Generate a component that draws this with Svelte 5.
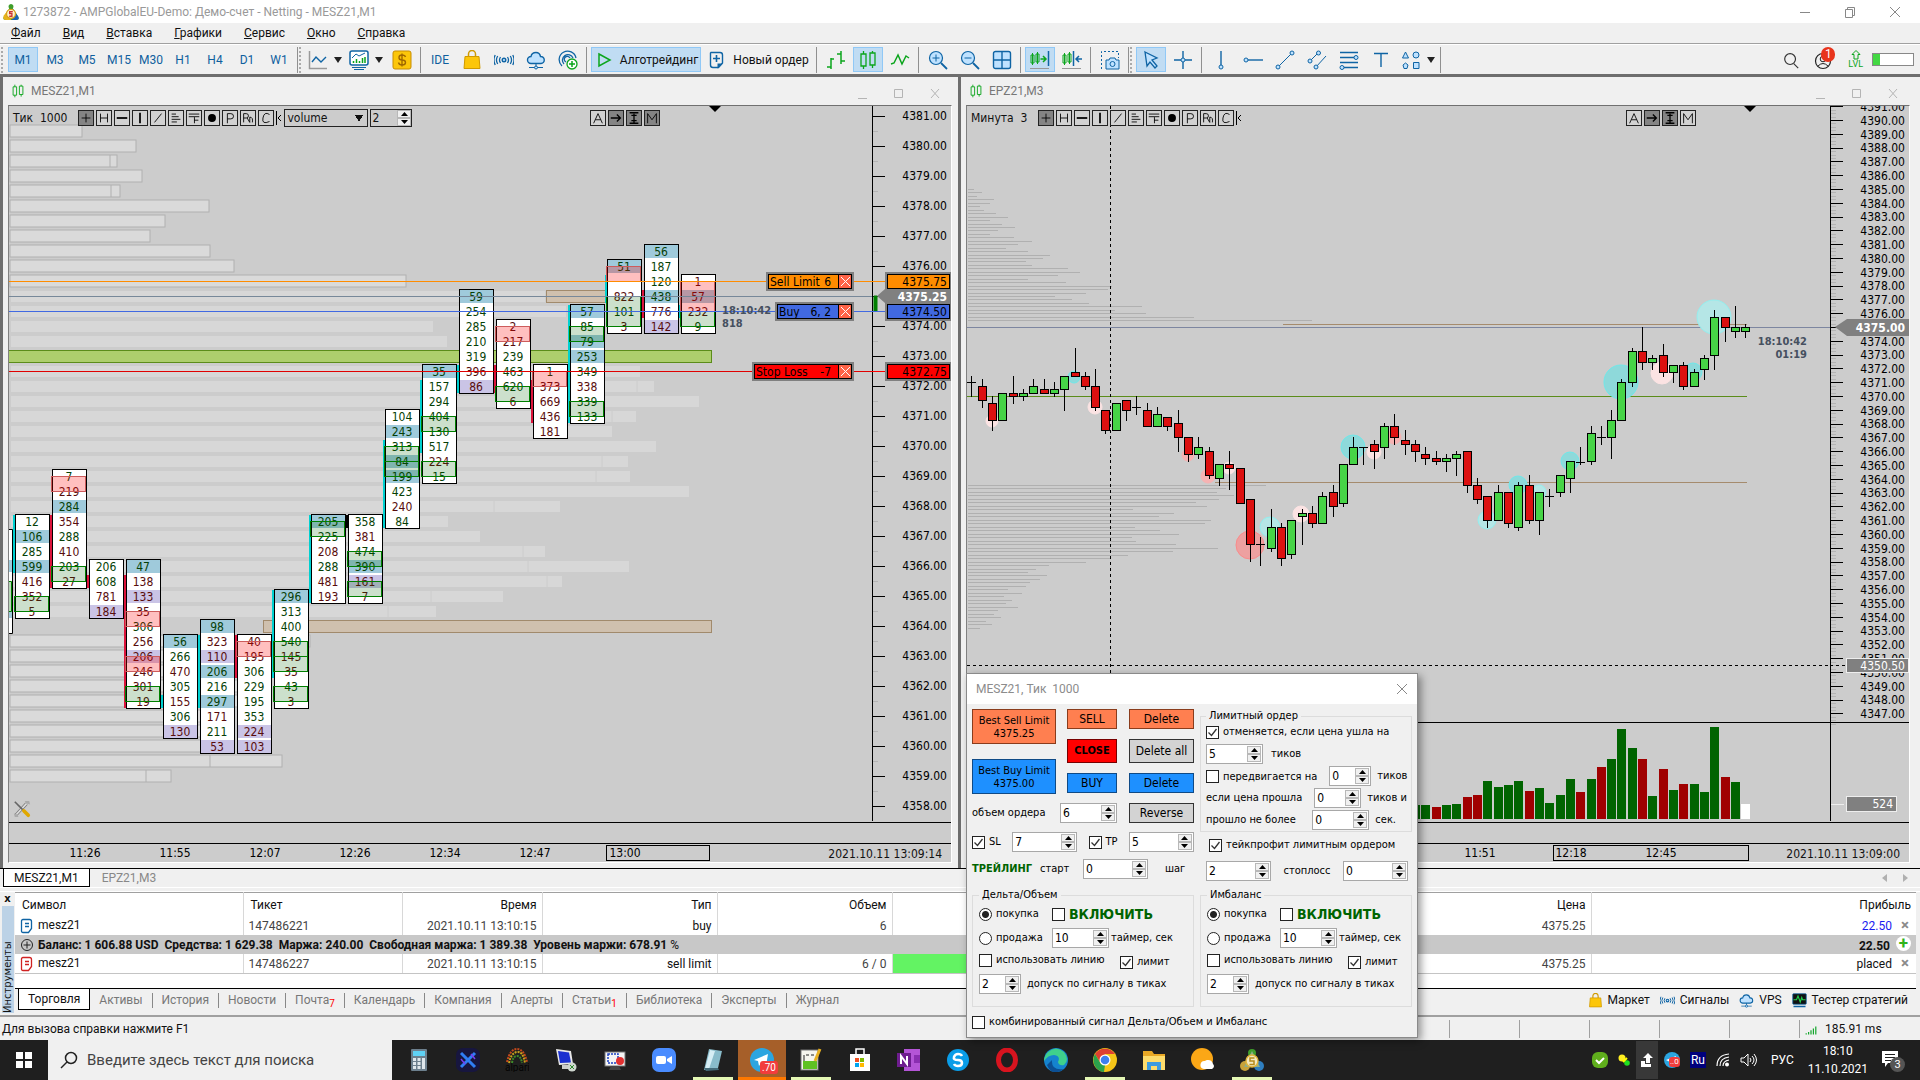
<script>
  const menu = ['Файл', 'Вид', 'Вставка', 'Графики', 'Сервис', 'Окно', 'Справка'];
  const timeframes = ['M1', 'M3', 'M5', 'M15', 'M30', 'H1', 'H4', 'D1', 'W1'];
  const pages = ['Активы', 'История', 'Новости', 'Почта', 'Календарь', 'Компания', 'Алерты', 'Статьи', 'Библиотека', 'Эксперты', 'Журнал'];
  const unread = { 'Почта': 7, 'Статьи': 1 };

  const B = 'stroke="#0f64a4" fill="none"';
  const L = 'stroke="#0f64a4" fill="#bfe2ff"';
  const G = 'stroke="#0ba51c" fill="none"';
  const cloud = `<path ${L} stroke-width="1.4" d="M5 13.500a3.500 3.500 0 0 1 0-7c.5-3 3-4 5-4s4 1.500 4.500 4a3.500 3.500 0 0 1 .5 7z"/><path ${B} d="M10 13.500v4M3 17.500h14"/><circle ${L} cx="10" cy="17.500" r="1.500"/>`;
  const bag = '<path stroke="#d09a00" stroke-width="1.500" fill="none" d="M6.500 8V4a3.500 3.500 0 0 1 7 0v4"/><path fill="#fcc60a" stroke="#d09a00" d="M3 6.500h14l1 12H2z"/>';
  const signal = `<circle ${L} stroke-width="1.400" cx="10" cy="10" r="1.800"/><path ${B} stroke-width="1.300" d="M6.500 7q-2 3 0 6M13.500 7q2 3 0 6M3.700 6q-2.500 4 0 8M16.300 6q2.500 4 0 8M1.200 5q-2.500 5 0 10M18.800 5q2.500 5 0 10"/>`;
  const sheet = `<path ${B} stroke-width="1.400" d="M4 2.500h9q2.500 0 2.500 2.500v8l-4 4.500H6q-2.500 0-2.500-2.500V3z"/>`;
  const icons = {
    line: `<path stroke="#9a9a9a" fill="none" stroke-width="1.500" d="M1.500 1v17.500H19"/><path ${B} stroke-width="1.400" d="M4 12l4-5 5 5 5-5"/>`,
    window: `<rect x="1" y="1" width="18" height="14" rx="2" fill="#fff" stroke="#0f64a4" stroke-width="1.500"/><path ${B} d="M3 8l4-4 3 2 6-3M3 17.500h14M5 19.500h10"/><path ${G} stroke-width="1.500" d="M4.500 13v-2M7.500 13V9M10.500 13v-2M13.500 13V8M16 13V7"/>`,
    dollar: '<rect x="1" y="1" width="18" height="18" rx="2" fill="#fcc60a" stroke="#c88d00"/><path stroke="#a06800" stroke-width="1.400" fill="none" d="M13.500 7Q13 5 10 5q-3 0-3 2.500T10 10q3.500 0 3.500 2.500T10 15q-3 0-3.500-2.500M10 3.500v13"/>',
    bag, signal, cloud,
    radio: `<path ${B} stroke-width="1.300" d="M4 16A8.500 8.500 0 1 1 18 8M6 14A5.500 5.500 0 1 1 15 8M8 12a3 3 0 1 1 4-4"/><circle cx="14" cy="14" r="5" fill="#fff" stroke="#0ba51c" stroke-width="1.300"/><path ${G} stroke-width="1.500" d="M14 11v6M11 14h6"/>`,
    play: `<path ${G} stroke-width="1.500" d="M5 4l11 6-11 6z"/>`,
    order: sheet + `<path ${B} stroke-width="1.600" d="M9.500 5v7M6 8.500h7"/><path fill="#0f64a4" d="M10.500 18.500v-5h5.500z"/>`,
    bars: `<path ${G} stroke-width="1.500" d="M5 8v11M1 17h4M5 9h3M15 1v13M11 4h4M15 11h4"/>`,
    candles: `<path ${G} stroke-width="1.300" d="M5.500 1v3M5.500 16v3M3 4h5v12H3zM14.500 1v2M14.500 15v3M12 3h5v12h-5z"/>`,
    zigzag: `<path ${G} stroke-width="1.500" d="M1 14l3-1 4-8 4 9 4-8 3 2"/>`,
    zoomin: `<path ${B} stroke-width="1.800" d="M13 13l6 6"/><circle ${L} stroke-width="1.200" cx="8" cy="8" r="6.500"/><path ${B} d="M8 4.500v7M4.500 8h7"/>`,
    zoomout: `<path ${B} stroke-width="1.800" d="M13 13l6 6"/><circle ${L} stroke-width="1.200" cx="8" cy="8" r="6.500"/><path ${B} d="M4.500 8h7"/>`,
    grid: `<rect ${L} stroke-width="1.400" x="1.500" y="1.500" width="17" height="17" rx="2"/><path ${B} stroke-width="1.400" d="M10 1v18M1 10h18"/>`,
    shift: `<path ${G} d="M2.500 3v12M1 5h3v8H1zM7.500 2v12M6 4h3v8H6z"/><path ${G} stroke-width="1.500" d="M10.500 9h5M13 6l3 3-3 3"/><path ${B} stroke-width="1.500" d="M18.500 1v15"/><path stroke="#999" d="M0 18.500h19"/>`,
    scroll: `<path ${G} d="M2.500 3v12M1 5h3v8H1zM7.500 2v12M6 4h3v8H6z"/><path ${B} stroke-width="1.500" d="M11.500 1v15M14 9h6M17 6l-3 3 3 3"/><path stroke="#999" d="M0 18.500h19"/>`,
    camera: `<path ${B} stroke-dasharray="2 2" d="M1.500 19V1.500h17V8"/><path ${L} d="M6 10h3l1-2h5l1 2h3v9H6z"/><circle ${L} cx="12.500" cy="14" r="2.500"/>`,
    cursor: `<path ${L} stroke-width="1.300" d="M4 2l12 6-5 2 5 6-2 2-5-6-3 4z"/>`,
    cross: `<path ${B} stroke-width="1.400" d="M10 1v7M10 12v7M1 10h7M12 10h7"/><circle ${L} cx="10" cy="10" r="2"/>`,
    vline: `<path ${B} stroke-width="1.400" d="M10 1v14"/><circle ${L} cx="10" cy="17" r="2"/>`,
    hline: `<path ${B} stroke-width="1.400" d="M5 10h15"/><circle ${L} cx="3" cy="10" r="2"/>`,
    trend: `<path ${B} d="M4 16L16 4"/><circle ${L} cx="3" cy="17" r="2"/><circle ${L} cx="17" cy="3" r="2"/>`,
    channel: `<path ${B} d="M4 10l7-7M9 17L19 6"/><circle ${L} cx="3" cy="11" r="2"/><circle ${L} cx="11.500" cy="3" r="2"/><circle ${L} cx="9" cy="17" r="2"/>`,
    fibo: `<path ${B} stroke-width="1.400" d="M1 2.500h18M1 7.500h15M1 12.500h18M4 17.500h15"/><circle ${L} cx="17" cy="7.500" r="2"/><circle ${L} cx="3" cy="17.500" r="2"/>`,
    text: `<path ${B} stroke-width="1.400" d="M3 3.500h14M10 3.500V17"/>`,
    shapes: `<path ${L} d="M1.500 8h6l-3-6zM2 15l2.500-2L7 15l-1 3.500H3zM12.500 12.500h5.500v6h-5.500z"/><circle ${L} cx="15" cy="5" r="3"/>`,
    search: '<circle cx="9" cy="9" r="6" fill="none" stroke="#333" stroke-width="1.300"/><path stroke="#333" stroke-width="1.300" d="M13 14l5 5"/>',
    user: '<circle cx="9" cy="11" r="7.500" fill="none" stroke="#222" stroke-width="1.200"/><circle cx="9" cy="9" r="2.800" fill="none" stroke="#222"/><path fill="none" stroke="#222" d="M4 16q5-5 10 0"/>',
    tester: '<rect x="1" y="1" width="18" height="14" rx="1" fill="#111" stroke="#0f64a4"/><path stroke="#1fd04a" stroke-width="1.500" fill="none" d="M2 9h4l2-5 3 8 2-6 1 3h4"/><path stroke="#0f64a4" stroke-width="2" d="M2 18h16"/>',
    levels: '<path fill="#13a62b" d="M1 17h2v2H1zM5 15h2v4H5zM9 12h2v7H9zM13 9h2v10h-2zM17 6h2v13h-2z"/>',
    mt: '<path d="M10 1a3 3 0 0 1 2 5L18 15q2 4-3 4H5q-5 0-3-4L8 6a3 3 0 0 1 2-5z" fill="#3f9e2c"/><path d="M12 6l6 9q2 4-3 4h-4z" fill="#1a63b5"/><path d="M2 14l4-5 4 10H5q-5 0-3-5z" fill="#e8b21a"/><circle cx="10" cy="12" r="5" fill="#fff3cf" stroke="#d8a21a" stroke-width="1.500"/><path stroke="#c33" fill="none" stroke-width="1.500" d="M12 9.500H8.500v2.200H11v3H8"/>',
    tools: '<path stroke="#777" stroke-width="3.500" d="M3 17L15 4"/><path stroke="#ddd" stroke-width="1.800" d="M3 17L15 4"/><path stroke="#666" stroke-width="1.800" d="M2 2l9 9"/><path stroke="#e0a800" stroke-width="4" stroke-linecap="round" d="M12 12l5 5"/><path d="M13 1l2 3 4 1-1-4M1 15l4 1 1 3H2z" fill="#aaa"/>',
  };

  const toolbar = [
    ['line', 'drop'], ['window', 'drop'], ['dollar'], 'sep', ['IDE'], ['bag'], ['signal'], ['cloud'], ['radio'], 'sep',
    ['play', 'wide on', 'Алготрейдинг'], ['order', 'wide', 'Новый ордер'], 'sep',
    ['bars'], ['candles', 'on'], ['zigzag'], 'sep', ['zoomin'], ['zoomout'], ['grid'], 'sep',
    ['shift', 'on'], ['scroll'], 'sep', ['camera'], 'grip', ['cursor', 'on'], ['cross'], 'sep',
    ['vline'], ['hline'], ['trend'], ['channel'], ['fibo'], ['text'], ['shapes', 'drop'],
  ];

  // glyphs of the square buttons that sit on the charts
  const marks = {
    plus: '<path d="M3 8h10M8 3v10"/>', H: '<path d="M4 3v10M12 3v10M4 8h8"/>', dash: '<path stroke-width="2" d="M2 8h12"/>',
    bar: '<path stroke-width="2" d="M8 2v12"/>', slash: '<path d="M4 13l8-10"/>', list: '<path d="M3 3.500h5M3 6.500h8M3 9.500h10M3 12.500h6"/>',
    F: '<path d="M2 3.500h12M2 6.500h12M8.500 14V7M8 10.500h5"/>', dot: '<circle cx="8" cy="8" r="4.500" fill="#000"/>',
    P: '<path d="M5 14V3h4q3 0 3 3t-3 3H5"/>', R: '<path d="M3 13V3h3q2.500 0 2.500 2.500T6 8H3M7 8l3 5M10 13V7q4 0 3 6"/>', C: '<path d="M12 4Q6 0 4.500 8T12 12"/>',
    A: '<path d="M3 14l5-11 5 11M5 10h6"/>', arrow: '<path stroke-width="1.500" d="M2 8h10M9 4l4 4-4 4"/>', fit: '<path stroke-width="1.500" d="M3 2h10M3 14h10M8 3v10M5 5h6M5 11h6"/>',
    M: '<path d="M3 14V3l5 7 5-7v11"/>',
  };
  const drawing = ['plus', 'H', 'dash', 'bar', 'slash', 'list', 'F', 'dot', 'P', 'R', 'C'];

  // footprint columns: first row, cells (g/r text, b/p fill), imbalance zones, side bar
  const columns = [
    [18, '12g 106gb 285g 599gb 416r 352r 5r', 'G5', 'c', 0, 4],
    [15, '7g 219r 284gb 354r 288g 410r 203g 27r', 'R0 G6', 'r', 3, 5],
    [21, '206g 608g 781r 184rp', '', 'r', 1, 1],
    [21, '47gb 138r 133rp 35r 306g 256r 206rp 246r 301r 19r', 'R3 R6 G8', 'r', 1, 9],
    [26, '56gb 266g 470r 305g 155r 306g 130rp', '', 'c', 4, 1],
    [25, '98gb 323r 110rp 206gb 216g 297gb 171r 211g 53rp', '', 'c', 1, 5],
    [26, '40r 195r 306g 229g 195g 353g 224rp 103rp', 'R0', 'r', 0, 3],
    [23, '296gb 313g 400g 540g 145r 35r 43g 3r', 'G3 G4 G6', 'c', 0, 6],
    [18, '205gb 225g 208r 288g 481r 193r', 'G0', 'c', 0, 6],
    [18, '358g 381r 474g 390gb 161rp 7r', 'G2 G4', 'k', 0, 1],
    [11, '104g 243gb 313g 84gb 199gb 423g 240r 84g', 'G2 G3', 'c', 2, 6],
    [8, '35gb 157g 294g 404g 130g 517g 224r 15g', 'G3 G6', 'c', 1, 5],
    [3, '59gb 254g 285g 210g 319g 396r 86rp', '', 'c', 5, 2],
    [5, '2r 217r 239g 463g 620g 6r', 'R0 G4', 'r', 3, 2],
    [8, '1g 373r 669r 436r 181r', 'R0', 'r', 1, 3],
    [4, '57gb 85g 79gb 253gb 349g 338r 339g 133g', 'G1 G6', 'c', 0, 8],
    [1, '51gb - 822r 101g 3r', 'R0 G2 G3', 'c', 1, 2],
    [0, '56gb 187g 120g 438gb 776r 142rp', '', 'r', 3, 2],
    [2, '1r 57rb 232r 9g', 'R0 R1 G2', 'c', 2, 1],
  ].map(([row, cells, zones, side, from, n], i) => ({
    x: 6 + 37 * i,
    y: 138 + 15 * row,
    cells: cells.split(' ').map((c) => ({ text: c.replace(/\D/g, ''), ink: c.includes('r') ? '#580c0c' : '#063f06', fill: c.includes('b') ? '#9fcadb' : c.includes('p') ? '#cac4e6' : '' })),
    zones: zones.split(' ').filter(Boolean).map((z) => ({ up: z[0] === 'G', row: +z.slice(1) })),
    side: { c: '#00d0d0', r: '#dc143c', k: '#000' }[side], from, n,
  }));

  // [row, end, divider]
  const outlined = [
    [-8, 72], [-7, 126], [-6, 107, 101], [-5, 132], [-4, 110, 102], [-3, 199], [-2, 155], [-1, 140], [0, 200], [1, 224], [2, 396],
    [26, 300], [27, 240], [28, 240], [29, 240], [30, 240], [31, 200], [32, 210, 168], [33, 213, 208], [34, 272, 201], [35, 161, 137],
  ];
  const plain = [
    [3, 536], [4, 557], [5, 424], [6, 438], [8, 631], [9, 645, 628], [10, 690], [11, 627, 603], [12, 603], [13, 647], [14, 619, 593], [15, 621, 587],
    [16, 680], [17, 551, 485], [18, 439], [19, 471], [20, 536, 514], [21, 620, 519], [22, 553, 538], [23, 494, 422], [24, 427, 379],
  ];

  const leftPrices = Array.from({ length: 24 }, (_, i) => 4381 - i);
  const rightPrices = Array.from({ length: 45 }, (_, i) => 4391 - i);
  const leftTimes = [['11:26', 76], ['11:55', 166], ['12:07', 256], ['12:26', 346], ['12:34', 436], ['12:47', 526], ['13:00', 616]];
  const orders = [
    ['Sell Limit', '6', 757, 175, '#ff8c00', '4375.75'],
    ['Buy', '6,  2', 766, 205, '#4169e1', '4374.50'],
    ['Stop Loss', '-7', 743, 265, '#ff0000', '4372.75'],
  ];

  // high, body top, body bottom, low, colour
  const candles = `96 102 102 117 n,99 106 121 128 r,116 123 141 151 r,113 113 141 141 g,96 113 117 124 r,109 113 117 121 g,99 106 114 114 g,99 109 114 114 r,102 109 114 117 g,96 96 110 131 g,68 92 97 97 r,92 96 107 110 r,89 106 128 131 r,130 130 151 154 r,123 123 151 151 g,120 120 131 141 r,116 127 127 135 n,123 130 147 147 r,127 134 147 147 g,137 137 147 151 r,130 143 158 172 r,157 157 175 182 r,157 167 175 179 g,167 171 196 199 r,184 184 199 206 g,171 184 189 210 r,188 188 224 224 r,219 219 265 282 r,257 264 264 286 n,229 247 269 272 g,243 247 279 286 r,240 240 275 279 g,229 233 237 265 g,226 233 244 248 r,212 216 244 244 g,205 212 227 237 r,184 184 224 227 g,157 167 185 185 g,167 167 167 185 n,160 164 172 189 r,143 146 168 179 g,134 146 158 165 r,150 160 165 175 r,160 164 172 182 r,167 174 179 185 r,171 178 182 185 r,174 178 182 192 g,171 174 179 196 g,171 171 206 213 r,198 205 220 224 r,216 216 241 248 r,205 212 241 241 g,212 212 244 248 r,202 205 248 251 g,195 205 241 244 r,212 212 241 255 g,209 216 216 227 n,195 195 213 217 g,181 181 199 213 g,167 182 182 185 n,146 153 182 185 g,146 157 157 165 n,130 140 158 179 g,99 102 141 141 g,68 71 103 107 g,47 71 83 90 r,75 78 83 90 g,64 75 93 97 r,85 85 93 103 g,82 85 107 110 r,89 92 107 107 g,75 78 90 100 g,30 37 76 90 g,37 37 48 62 r,26 47 52 58 g,44 47 52 58 g`
    .split(',')
    .map((s, i) => {
      const [hi, top, bottom, lo, kind] = s.split(' ');
      return { x: Math.round(4.3 + 10.32 * i), hi: +hi, top: +top, bottom: +bottom, lo: +lo, kind };
    });

  const bubbles = [
    [107, 97, 6, 'c'], [25, 141, 6, 'w'], [128, 127, 7, 'w'], [221, 175, 6, 'p'], [241, 196, 7, 'p'], [262, 188, 6, 'w'], [283, 265, 14, 'r'],
    [303, 247, 10, 'l'], [334, 234, 8, 'w'], [386, 167, 12, 'c'], [407, 172, 7, 'w'], [427, 157, 7, 'p'], [520, 240, 9, 'l'], [551, 205, 9, 'c'],
    [572, 212, 7, 'l'], [603, 181, 9, 'c'], [654, 102, 17, 'c'], [695, 93, 11, 'w'], [726, 92, 9, 'c'], [747, 37, 17, 'l'],
  ];
  const bubbleFill = { c: '#8ed9da', l: '#b5e6e6', w: '#fbe3e3', p: '#f6b3b3', r: '#eda0a0' };
  const bubbleLine = { c: '#6ee8ea', l: '#93efef', w: '#fbe3e3', p: '#f6b3b3', r: '#fa8b8b' };

  const volume = '14g 14g 12r 14g 15g 22r 24r 38g 32g 34g 38g 28r 31g 16g 24g 40g 27r 40g 52r 60g 90g 71g 60r 23g 50r 29g 35r 35g 27g 92g 42r 37g 15w'
    .split(' ')
    .map((s, i) => ({ h: parseInt(s), fill: { g: '#006400', r: '#a00000', w: '#fff' }[s.at(-1)], x: Math.round(4.3 + 10.32 * (i + 43)) }));

  const upperProfile = [6, 14, 9, 26, 22, 12, 16, 28, 40, 22, 34, 47, 30, 22, 46, 64, 50, 38, 60, 82, 75, 58, 64, 100, 112, 90, 60, 98, 144, 140, 118, 87, 104, 121, 174, 147, 178, 226, 344];
  const lowerProfile = [298, 258, 249, 266, 251, 228, 239, 165, 206, 191, 243, 237, 167, 192, 211, 164, 168, 208, 250, 205, 160, 142, 118, 81, 68, 60, 79, 72, 62, 58, 40, 54, 36, 44, 38, 50, 30, 26, 33, 18, 24, 12];

  const apps = [
    '<rect x="4" y="1" width="16" height="22" rx="1" fill="#6c7f8d"/><path fill="#5fd2f5" d="M6 3h12v5H6z"/><path fill="#dfe7ec" d="M6 10h3v3H6zM10.500 10h3v3h-3zM6 14h3v3H6zM10.500 14h3v3h-3zM6 18h3v3H6zM10.500 18h3v3h-3zM15 10h3v11h-3z"/>',
    '<rect width="24" height="24" rx="7" fill="#17163f"/><path stroke="#2f7ef5" stroke-width="3" d="M5 5l14 14M19 5L5 19"/><path stroke="#7a3df0" stroke-width="1.500" d="M5 11l4 5M19 11l-4-5"/>',
    '<path fill="none" stroke="#c64a1c" stroke-width="2" stroke-dasharray="2 1" d="M2 14Q5 1 12 1t10 13"/><path fill="none" stroke="#c7a21c" stroke-width="2" stroke-dasharray="2 1" d="M4 15Q6 5 12 4t8 11"/><path fill="none" stroke="#3e8b2a" stroke-width="2" stroke-dasharray="2 1" d="M7 15Q8 8 12 8t5 7"/><text x="0" y="23" font-size="10" fill="#050505">alpari</text>',
    '<path fill="#e8e8e8" d="M2 1l15 2 2 13-14 1z"/><path fill="#1a2fd0" d="M4 3l11 1.500 2 10L6 15z"/><path fill="#ccc" d="M8 17h7l3 4H8z"/><circle cx="18" cy="19" r="4.500" fill="#cfd6cf"/><path stroke="#2e8b2e" d="M16 17l4 4M20 17l-4 4"/>',
    '<rect x="2" y="4" width="20" height="14" fill="#f5f5f5" stroke="#777"/><path d="M8 18h8l2 4H6z" fill="#444"/><rect x="5" y="6" width="10" height="9" fill="none" stroke="#1a3fc0" stroke-dasharray="2 1" stroke-width="1.500"/><circle cx="17" cy="13" r="4" fill="#e03030"/>',
    '<rect width="24" height="24" rx="7" fill="#4a8cff"/><rect x="4" y="8" width="10" height="8" rx="2" fill="#fff"/><path fill="#fff" d="M15 11l5-3v8l-5-3z"/>',
    '<path fill="#89bccb" d="M8 1l13 2-4 17-14 2z"/><path fill="#d6eef5" d="M9 2l5 1-6 18-4 0z"/><path fill="#456c7a" d="M3 20l14 0 1 2-13 1z"/>',
    '<circle cx="12" cy="12" r="12" fill="#2ca5e0"/><path fill="#fff" d="M4 12l14-6-2 12-5-3-2 3-1-5z"/>',
    '<rect x="2" y="2" width="17" height="20" fill="#f5f5ee" stroke="#777"/><path fill="#5fc122" d="M4 13h14v8H4z"/><path stroke="#222" d="M5 7v6M7 7h3M12 7h3"/><path stroke="#e8b020" stroke-width="3" d="M21 1l-5 12"/>',
    '<path fill="none" stroke="#fff" stroke-width="1.500" d="M8 6V1h8v5"/><path fill="#fff" d="M2 6h20v17H2z"/><path fill="#f25022" d="M7 10h4v4H7z"/><path fill="#7fba00" d="M12 10h4v4h-4z"/><path fill="#00a4ef" d="M7 15h4v4H7z"/><path fill="#ffb900" d="M12 15h4v4h-4z"/>',
    '<path fill="#b455d6" d="M7 1h16v22H7z"/><path fill="#8a2eb0" d="M17 7h6v8h-6z"/><rect y="5" width="14" height="14" fill="#6e1d8f"/><path stroke="#fff" stroke-width="2" fill="none" d="M4 16V8l6 8V8"/>',
    '<circle cx="12" cy="12" r="11" fill="#0a9de8"/><path fill="none" stroke="#fff" stroke-width="2.500" d="M16 8q-1-2-4-2t-4 3 4 3q4 0 4 3t-4 3q-3 0-4-2"/>',
    '<ellipse cx="12" cy="12" rx="8.500" ry="10" fill="none" stroke="#d8141f" stroke-width="5"/>',
    '<circle cx="12" cy="12" r="12" fill="#1583cf"/><path fill="#3fd08c" d="M4 4Q12-3 20 4q6 8 0 13-5 1-6-3 3-6-4-7-6 0-10 6Q0 8 4 4z"/><path fill="#0c4f94" d="M8 12q-1 11 12 9-12 8-17-4z"/>',
    '<circle cx="12" cy="12" r="12" fill="#f5c518"/><path fill="#de4032" d="M2 6A12 12 0 0 1 22 6H12L7 14z"/><path fill="#2ba24c" d="M2 6l6 10 4 1-1 7A12 12 0 0 1 2 6z"/><circle cx="12" cy="12" r="5.500" fill="#fff"/><circle cx="12" cy="12" r="4.300" fill="#3d7ff0"/>',
    '<path fill="#e9a825" d="M1 3h9l2 3h11v16H1z"/><path fill="#fddc6c" d="M1 8h22v14H1z"/><path fill="#3c9be0" d="M5 22v-8h14v8h-4v-4H9v4z"/>',
    '<circle cx="11" cy="11" r="11" fill="#fba716"/><path fill="#fff" d="M13 21a4 4 0 0 1 1-8 5 5 0 0 1 8 3 3 3 0 0 1-1 5z"/>',
    '<circle cx="12" cy="5" r="4" fill="#3f9e2c"/><circle cx="5" cy="18" r="5" fill="#c8a23a"/><circle cx="19" cy="18" r="5" fill="#2f7fc0"/><path d="M12 3l8 16H4z" fill="#8fae8a"/><circle cx="12" cy="13" r="6" fill="#f4e9c0" stroke="#e0b43a" stroke-width="1.500"/><path stroke="#b58a1a" fill="none" stroke-width="1.500" d="M14.500 10H10v3h4v3.500H9.500"/>',
  ];
  const running = [6, 8, 14, 17];
</script>

{#snippet icon(name, size = 20)}
  <svg class="icon" width={size} height={size} viewBox="0 0 20 20">{@html icons[name]}</svg>
{/snippet}

{#snippet mark(name, on)}
  <button class="mark" class:on aria-label={name}><svg width="14" height="14" viewBox="0 0 16 16">{@html marks[name]}</svg></button>
{/snippet}

{#snippet arrows()}
  <span class="arrows"><button type="button" aria-label="Больше"><svg width="7" height="4"><path d="M0 4h7L3.500 0z" /></svg></button><button type="button" aria-label="Меньше"><svg width="7" height="4"><path d="M0 0h7L3.500 4z" /></svg></button></span>
{/snippet}

{#snippet spin(id, value, size, label)}
  <span class="spin {size}"><input {id} type="text" {value} aria-label={label} />{@render arrows()}</span>
{/snippet}

{#snippet tick(id, text, checked = false)}
  <label class="tick" for={id}><input {id} type="checkbox" {checked} />{text}</label>
{/snippet}

{#snippet windowButtons()}
  <span class="winbtns">
    <button aria-label="Свернуть"><svg width="12" height="12"><path d="M1 11.500h9" /></svg></button>
    <button aria-label="Развернуть"><svg width="12" height="12"><path d="M1.500 2.500h8v8h-8z" /></svg></button>
    <button aria-label="Закрыть"><svg width="12" height="12"><path d="M2 2l8 9M10 2l-8 9" /></svg></button>
  </span>
{/snippet}

{#snippet signalGroup(id, title)}
  <fieldset class="group signal {id}">
    <legend>{title}</legend>
    <div class="line">
      <label class="tick way" for="{id}-buy"><input id="{id}-buy" name={id} type="radio" checked />покупка</label>
      <label class="tick enable" for="{id}-on"><input id="{id}-on" type="checkbox" />ВКЛЮЧИТЬ</label>
    </div>
    <div class="line">
      <label class="tick way" for="{id}-sell"><input id="{id}-sell" name={id} type="radio" />продажа</label>
      {@render spin(id + '-timer', 10, 'w57')}
      <label for="{id}-timer">таймер, сек</label>
    </div>
    <div class="line">
      <span class="useline">{@render tick(id + '-line', 'использовать линию')}</span>
      {@render tick(id + '-limit', 'лимит', true)}
    </div>
    <div class="line tolerance">
      {@render spin(id + '-tol', 2, 'w42')}
      <label for="{id}-tol">допуск по сигналу в тиках</label>
    </div>
  </fieldset>
{/snippet}

<div class="screen">
  <header class="titlebar">
    {@render icon('mt')}
    <h1>1273872 - AMPGlobalEU-Demo: Демо-счет - Netting - MESZ21,M1</h1>
    <span class="appbtns">
      <button aria-label="Свернуть"><svg width="12" height="12"><path d="M1 6.500h10" /></svg></button>
      <button aria-label="Восстановить"><svg width="12" height="12"><path d="M1.500 3.500h7v8h-7zM3.500 3V1.500h7v8H9" /></svg></button>
      <button aria-label="Закрыть"><svg width="12" height="12"><path d="M1 1l10 10M11 1L1 11" /></svg></button>
    </span>
  </header>

  <nav class="menu">
    {#each menu as item}
      <a href="#{item}"><u>{item[0]}</u>{item.slice(1)}</a>
    {/each}
  </nav>

  <div class="toolbar">
    <i class="grip"></i>
    {#each timeframes as tf, i}
      <button class="tool" class:on={i === 0}>{tf}</button>
    {/each}
    <i class="sep"></i><i class="grip"></i>
    {#each toolbar as item}
      {#if item === 'sep'}
        <i class="sep"></i>
      {:else if item === 'grip'}
        <i class="sep"></i><i class="grip"></i>
      {:else}
        <button class="tool {item[1] ?? ''}" aria-label={item[2] ?? item[0]}>
          {#if item[0] === 'IDE'}IDE{:else}{@render icon(item[0])}{/if}
          {#if item[2]}<span>{item[2]}</span>{/if}
          {#if item[1] === 'drop'}<svg width="8" height="6"><path d="M0 0h8L4 6z" fill="#222" /></svg>{/if}
        </button>
      {/if}
    {/each}
    <i class="sep"></i>
    <div class="account">
      <button aria-label="Поиск">{@render icon('search', 18)}</button>
      <button class="user" aria-label="Уведомления">{@render icon('user')}<b>1</b></button>
      <span class="lvl"><svg width="12" height="10"><path d="M6 .5l4 4H8V9H4V4.500H2z" fill="none" stroke="#0ba51c" /></svg>LVL</span>
      <span class="battery"><i></i></span>
    </div>
  </div>

  <main class="workspace">
    <section class="window">
      <header>
        <svg class="icon" width="14" height="14" viewBox="0 0 20 20">{@html icons.candles}</svg>
        <h2>MESZ21,M1</h2>
        {@render windowButtons()}
      </header>
      <div class="chart">
        <svg class="plot" height="756">
          {#each outlined as [row, end, div]}
            <rect x="1" y={138 + 15 * row + 1} width={end} height="12" fill="#dadada" stroke="#b0b0b0" />
            {#if div}<path d="M{div} {138 + 15 * row + 1}v12" stroke="#b0b0b0" />{/if}
          {/each}
          {#each plain as [row, end, div]}
            <rect x="2" y={138 + 15 * row + 2} width={end - 2} height="11" fill="#d7d7d7" />
            {#if div}<path d="M{div} {138 + 15 * row + 2}v11" stroke="#ccc" />{/if}
          {/each}
          <rect x="-1" y="244.500" width="703.500" height="12" fill="#adce6d" stroke="#5b8c1a" />
          <rect x="537.500" y="184.500" width="64" height="12" fill="#cfc0ae" stroke="#a18a6c" />
          <rect x="254.500" y="514.500" width="448" height="12" fill="#cfc0ae" stroke="#a18a6c" />
          <path d="M0 423.500h3.500v104H0" fill="#fff" stroke="#000" />
          <path d="M0 454h3v12H0zM0 500h3v12H0z" fill="#9fcadb" />
          <path d="M0 475.500h2.500v30H0" fill="#b9d6b9" stroke="#008000" />
          {#each columns as c}
            {#if c.side}<rect x={c.x - 2} y={c.y + 15 * c.from + 1} width="3" height={15 * c.n - 2} fill={c.side} />{/if}
            <rect x={c.x + 0.5} y={c.y + 0.5} width="34" height={15 * c.cells.length - 1} fill="#fff" stroke="#000" />
            {#each c.cells as cell, r}
              {#if cell.fill}<rect x={c.x + 1} y={c.y + 15 * r + 1} width="33" height="13" fill={cell.fill} />{/if}
              <text class="cell" x={c.x + 17} y={c.y + 15 * r + 12} fill={cell.ink}>{cell.text}</text>
            {/each}
            {#each c.zones as z}
              <rect x={c.x - 0.5} y={c.y + 15 * z.row + 7.5} width="34" height="15" fill={z.up ? '#00640033' : '#ff000040'} stroke={z.up ? '#008000' : '#cd5c5c'} />
            {/each}
          {/each}
          <path d="M0 175.500h863" stroke="#ff8c00" />
          <path d="M0 190.500h863" stroke="#778899" />
          <path d="M0 205.500h863" stroke="#4169e1" />
          <path d="M0 265.500h863" stroke="#e00000" />
          <text class="clock" x="713" y="208">18:10:42</text>
          <text class="clock" x="713" y="221">818</text>
          {#each orders as [name, lots, x, y, fill]}
            <rect {x} y={y - 9} width={845 - x} height="19" fill="#808080" />
            <rect x={x + 2.5} y={y - 6.5} width={840 - x} height="14" {fill} stroke="#000" />
            <rect x="829.500" y={y - 6.5} width="13" height="14" fill="#ff6347" stroke="#000" />
            <path d="M832 {y - 4}l9 9M841 {y - 4}l-9 9" stroke="#fff" />
            <text x={x + 4} y={y + 5}>{name}</text>
            <text class="end" x="822" y={y + 5}>{lots}</text>
          {/each}
          <path d="M700 0h12l-6 6z" />
          <path d="M0 716.500h863M0 737.500h863" stroke="#000" />
          <rect x="597.500" y="739.500" width="103" height="15" fill="none" stroke="#000" />
          {#each leftTimes as [time, x]}
            <text class="mid" {x} y="751">{time}</text>
          {/each}
        </svg>
        <svg class="axis" height="756">
          <path d="M.5 0v715M0 716.500h80M0 737.500h80" stroke="#000" />
          {#each leftPrices as p, i}
            <path d="M0 {10.5 + 30 * i}h13" stroke="#000" />
            {#if i < 23}<path d="M1 {25.5 + 30 * i}h5" stroke="#b4b4b4" />{/if}
            {#if p !== 4375}<text class="end" x="75" y={14 + 30 * i}>{p}.00</text>{/if}
          {/each}
          <path d="M2 190h3v15H2z" fill="#008000" stroke="#008000" />
          <path d="M5 190l8-7h66v14H13z" fill="#808080" />
          <text class="end tag" x="75" y="195">4375.25</text>
          {#each orders as [, , , y, fill, price]}
            <path d="M0 {y + 0.5}h13" stroke={fill} />
            <rect x="13" y={y - 9} width="66" height="19" fill="#808080" />
            <rect x="15.500" y={y - 6.5} width="62" height="14" {fill} stroke="#000" />
            <text class="end" x="75" y={y + 5}>{price}</text>
          {/each}
        </svg>
        <div class="panel">
          <span>Тик&nbsp; 1000</span>
          {#each drawing as name, i}{@render mark(name, i === 0)}{/each}
          <svg class="fold" width="6" height="14"><path d="M.5 0v14M5 4L2 7l3 3" fill="none" stroke="#000" /></svg>
          <select aria-label="Тип кластера"><option>volume</option></select>
          <span class="spin flat"><input type="text" value="2" aria-label="Масштаб" />{@render arrows()}</span>
        </div>
        <div class="panel modes">{@render mark('A')}{@render mark('arrow', true)}{@render mark('fit', true)}{@render mark('M', true)}</div>
        <div class="wrench">{@render icon('tools', 18)}</div>
        <time>2021.10.11 13:09:14</time>
      </div>
    </section>

    <section class="window">
      <header>
        <svg class="icon" width="14" height="14" viewBox="0 0 20 20">{@html icons.candles}</svg>
        <h2>EPZ21,M3</h2>
        {@render windowButtons()}
      </header>
      <div class="chart">
        <svg class="plot" height="756">
          {#each upperProfile as w, i}
            <path d="M1 {Math.round(83 + 3.45 * i) + 0.5}h{w}" stroke="#b0b0b0" />
          {/each}
          {#each lowerProfile as w, i}
            <path d="M1 {Math.round(379 + 3.48 * i) + 0.5}h{w}" stroke="#b0b0b0" />
          {/each}
          <path d="M316 218.500h464M248 376.500h532" stroke="#a58b6d" />
          <path d="M0 221.500h863" stroke="#7d86a0" />
          <path d="M0 290.500h780" stroke="#5b8c1a" />
          <g transform="translate(0 174)">
            {#each bubbles as [cx, cy, r, kind]}
              <circle {cx} {cy} {r} fill={bubbleFill[kind]} stroke={bubbleLine[kind]} />
            {/each}
            {#each candles as c}
              <path d="M{c.x + 0.5} {c.hi}V{c.lo}" stroke="#000" />
              {#if c.kind === 'n'}
                <path d="M{c.x - 4} {c.top + 0.5}h9" stroke="#000" />
              {:else}
                <rect x={c.x - 3.5} y={c.top + 0.5} width="8" height={Math.max(c.bottom - c.top - 1, 3)} fill={c.kind === 'g' ? '#47d447' : '#dc1010'} stroke="#000" />
              {/if}
            {/each}
          </g>
          <path d="M143.500 0v616M0 559.500h863" stroke="#000" stroke-dasharray="3 3" />
          {#each volume as v}
            <rect x={v.x - 4} y={713 - v.h} width="9" height={v.h} fill={v.fill} />
          {/each}
          <text class="clock end" x="840" y="239">18:10:42</text>
          <text class="clock end" x="840" y="252">01:19</text>
          <path d="M777 0h12l-6 6z" />
          <path d="M0 616.500h863M0 716.500h863M0 737.500h863" stroke="#000" />
          <rect x="586.500" y="739.500" width="195" height="15" fill="none" stroke="#000" />
          <text class="mid" x="513" y="751">11:51</text>
          <text class="mid" x="604" y="751">12:18</text>
          <text class="mid" x="694" y="751">12:45</text>
        </svg>
        <svg class="axis" height="756">
          <path d="M.5 0v715M0 616.500h80M0 716.500h80M0 737.500h80" stroke="#000" />
          {#each rightPrices as p, i}
            <path d="M0 {Math.round(0.2 + 13.8 * i) + 0.5}h13" stroke="#000" />
            {#each [1, 2, 3] as k}<path d="M1 {Math.round(0.2 + 13.8 * i + 3.45 * k) + 0.5}h5" stroke="#b4b4b4" />{/each}
            {#if p !== 4375}<text class="end" x="75" y={Math.round(13.8 * i) + 5}>{p}.00</text>{/if}
          {/each}
          <path d="M5 221l12-8h62v17H17z" fill="#808080" />
          <text class="end tag" x="75" y="226">4375.00</text>
          <path d="M0 559.500h16" stroke="#000" stroke-dasharray="3 3" />
          <rect x="16.500" y="552.500" width="62" height="14" fill="#808080" stroke="#eee" />
          <text class="end tag light" x="75" y="564">4350.50</text>
          <path d="M1 698.500h13" stroke="#eee" />
          <rect x="16.500" y="690.500" width="50" height="15" fill="#808080" stroke="#eee" />
          <text class="end tag light" x="63" y="702">524</text>
        </svg>
        <div class="panel">
          <span>Минута&nbsp; 3</span>
          {#each drawing as name, i}{@render mark(name, i === 0)}{/each}
          <svg class="fold" width="6" height="14"><path d="M.5 0v14M5 4L2 7l3 3" fill="none" stroke="#000" /></svg>
        </div>
        <div class="panel modes">{@render mark('A')}{@render mark('arrow', true)}{@render mark('fit', true)}{@render mark('M')}</div>
        <time>2021.10.11 13:09:00</time>
      </div>
    </section>
  </main>

  <nav class="tabs">
    <a class="active" href="#mesz">MESZ21,M1</a>
    <a href="#epz">EPZ21,M3</a>
    <span class="nudge"><svg width="5" height="8"><path d="M5 0v8L0 4z" /></svg><svg width="5" height="8"><path d="M0 0v8l5-4z" /></svg></span>
  </nav>

  <section class="terminal">
    <div class="strip"><button aria-label="Закрыть панель">x</button><span>Инструменты</span></div>
    <div class="terminal-main">
      <table>
        <colgroup><col class="c1" /><col class="c2" /><col class="c3" /><col class="c4" /><col class="c5" /><col /><col class="c7" /><col class="c8" /></colgroup>
        <thead>
          <tr><th class="left">Символ</th><th class="left">Тикет</th><th>Время</th><th>Тип</th><th>Объем</th><th class="hid"></th><th>Цена</th><th>Прибыль</th></tr>
        </thead>
        <tbody>
          <tr>
            <td class="left sym"><svg width="14" height="16"><path d="M3 1.500h6.500q2 0 2 2v7l-3 4H3q-1.500 0-1.500-1.500V3Q1.500 1.500 3 1.500zM5 5.500h4M5 8.500h4" fill="none" stroke="#0f64a4" stroke-width="1.300" /></svg>mesz21</td>
            <td class="left">147486221</td><td>2021.10.11 13:10:15</td><td class="dark">buy</td><td>6</td><td class="hid"></td><td>4375.25</td>
            <td><span class="profit">22.50</span><button class="x" aria-label="Закрыть позицию">×</button></td>
          </tr>
          <tr class="balance">
            <td class="left" colspan="7"><svg width="14" height="14"><path d="M7 3.500v7M3.500 7h7" stroke="#222" /><circle cx="7" cy="7" r="5.500" fill="none" stroke="#222" /></svg>Баланс: 1 606.88 USD&nbsp; Средства: 1 629.38&nbsp; Маржа: 240.00&nbsp; Свободная маржа: 1 389.38&nbsp; Уровень маржи: 678.91 <span>%</span></td>
            <td>22.50<button class="add" aria-label="Добавить">+</button></td>
          </tr>
          <tr>
            <td class="left sym"><svg width="14" height="16"><path d="M3 1.500h6.500q2 0 2 2v7l-3 4H3q-1.500 0-1.500-1.500V3Q1.500 1.500 3 1.500zM5 5.500h4M5 8.500h4" fill="none" stroke="#d02222" stroke-width="1.300" /></svg>mesz21</td>
            <td class="left">147486227</td><td>2021.10.11 13:10:15</td><td class="dark">sell limit</td><td>6 / 0</td><td class="hid filled"></td><td>4375.25</td>
            <td class="dark">placed<button class="x" aria-label="Удалить ордер">×</button></td>
          </tr>
        </tbody>
      </table>
      <nav class="pages">
        <a class="active" href="#trade">Торговля</a>
        {#each pages as page}
          <a href="#{page}">{page}{#if unread[page]}<sub>{unread[page]}</sub>{/if}</a>
        {/each}
        <span class="services">
          <a href="#market">{@render icon('bag', 15)}Маркет</a>
          <a href="#signals">{@render icon('signal', 15)}Сигналы</a>
          <a href="#vps">{@render icon('cloud', 15)}VPS</a>
          <a href="#tester">{@render icon('tester', 15)}Тестер стратегий</a>
        </span>
      </nav>
    </div>
  </section>

  <footer class="status">
    <span class="help">Для вызова справки нажмите F1</span>
    <i></i><i></i><i></i><i></i><i></i><i class="last"></i>
    <span class="ping">{@render icon('levels', 12)}185.91 ms</span>
  </footer>

  <div class="taskbar">
    <button class="start" aria-label="Пуск"><svg width="16" height="16"><path fill="#fff" d="M0 0h7v7H0zM9 0h7v7H9zM0 9h7v7H0zM9 9h7v7H9z" /></svg></button>
    <label class="find" for="find"><svg width="18" height="18"><circle cx="11" cy="7" r="5.500" fill="none" stroke="#222" stroke-width="1.500" /><path d="M7 11l-6 6" stroke="#222" stroke-width="1.500" /></svg><input id="find" type="text" placeholder="Введите здесь текст для поиска" /></label>
    <div class="apps">
      {#each apps as app, i}
        <button class:run={running.includes(i)} class:alert={i === 7} aria-label="Приложение {i + 1}">
          <svg width="24" height="24" viewBox="0 0 24 24">{@html app}</svg>
          {#if i === 7}<b>.70</b>{/if}
        </button>
      {/each}
    </div>
    <div class="tray">
      <svg width="16" height="16"><rect width="16" height="16" rx="6" fill="#5fae1c" /><path d="M4 8l3 3 5-5" stroke="#fff" stroke-width="2" fill="none" /></svg>
      <svg width="12" height="12"><circle cx="4" cy="4" r="3.500" fill="#ffee20" /><circle cx="9" cy="9" r="2.800" fill="#20e020" /><path d="M5 8l4-4" stroke="#ff0" stroke-width="2" /></svg>
      <span class="up"><svg width="14" height="16"><path d="M8 1l5 5h-3v5H6V6H3z" fill="#fff" /><path d="M1 9h4v3h6v3H1z" fill="#fff" /></svg></span>
      <span class="tg"><svg width="16" height="16"><circle cx="8" cy="8" r="8" fill="#2ca5e0" /><path d="M2 8l10-4-2 8-4-2z" fill="#fff" /></svg><b>..0</b></span>
      <span class="ru">Ru</span>
      <svg width="14" height="14"><path d="M1 13Q1 2 13 1M4 13q0-8 9-9M7 13q0-5 6-6" fill="none" stroke="#fff" stroke-width="1.200" /><circle cx="11" cy="11.500" r="2" fill="#fff" /></svg>
      <svg width="17" height="14"><path d="M1 5h3l4-4v12L4 9H1zM10 5q2 2 0 4M12 3q4 4 0 8M14 1q5 6 0 12" fill="none" stroke="#fff" /></svg>
      <span class="lang">РУС</span>
      <span class="now">18:10<br />11.10.2021</span>
      <span class="notes"><svg width="18" height="18"><path fill="#fff" d="M0 0h16v12H6l-3 4v-4H0z" /><path stroke="#1f1f1f" d="M3 3.500h10M3 6.500h10M3 9.500h6" /></svg><b>3</b></span>
    </div>
  </div>

  <form class="dialog">
    <header><h2>MESZ21, Тик&nbsp; 1000</h2><button type="button" aria-label="Закрыть"><svg width="12" height="12"><path d="M1 1l10 10M11 1L1 11" stroke="#888" /></svg></button></header>
    <div class="body">
      <div class="cols">
        <div class="leftcol">
          <div class="orders">
            <div>
              <div class="pair">
                <div class="stack big">
                  <button type="button" class="sell">Best Sell Limit<br />4375.25</button>
                  <button type="button" class="buy">Best Buy Limit<br />4375.00</button>
                </div>
                <div class="stack">
                  <button type="button" class="sell">SELL</button>
                  <button type="button" class="close">CLOSE</button>
                  <button type="button" class="buy">BUY</button>
                </div>
              </div>
              <div class="row spread"><label for="lots">объем ордера</label>{@render spin('lots', 6, 'w57')}</div>
            </div>
            <div class="stack wide">
              <button type="button" class="sell">Delete</button>
              <button type="button" class="all">Delete all</button>
              <button type="button" class="buy">Delete</button>
              <button type="button" class="rev">Reverse</button>
            </div>
          </div>
          <div class="row stops">
            {@render tick('sl', 'SL', true)}{@render spin('sl-ticks', 7, 'w65', 'SL')}
            {@render tick('tp', 'TP', true)}{@render spin('tp-ticks', 5, 'w65', 'TP')}
          </div>
          <div class="row trail">
            <strong>ТРЕЙЛИНГ</strong><label for="start">старт</label>{@render spin('start', 0, 'w65')}<label class="step" for="step">шаг</label>
          </div>
        </div>
        <div class="rightcol">
          <fieldset class="group limit">
            <legend>Лимитный ордер</legend>
            {@render tick('cancel', 'отменяется, если цена ушла на', true)}
            <div class="line">{@render spin('away', 5, 'w57')}<label for="away">тиков</label></div>
            <div class="line end">{@render tick('move', 'передвигается на')}<span class="fill"></span>{@render spin('shift', 0, 'w42')}<label for="shift">тиков</label></div>
            <div class="line end"><label for="passed">если цена прошла</label><span class="fill"></span>{@render spin('passed', 0, 'w47')}<label for="passed">тиков и</label></div>
            <div class="line end third"><label for="wait">прошло не более</label><span class="fill"></span>{@render spin('wait', 0, 'w57')}<label for="wait">сек.</label></div>
          </fieldset>
          <div class="row profitrow">{@render tick('tplimit', 'тейкпрофит лимитным ордером', true)}</div>
          <div class="row trail2">{@render spin('step', 2, 'w65')}<label for="stoploss">стоплосс</label>{@render spin('stoploss', 0, 'w65')}</div>
        </div>
      </div>
      <div class="signals">
        {@render signalGroup('delta', 'Дельта/Объем')}
        {@render signalGroup('imb', 'Имбаланс')}
      </div>
      <div class="combined">{@render tick('combined', 'комбинированный сигнал Дельта/Объем и Имбаланс')}</div>
    </div>
  </form>
</div>

<style>
  :global(body) { margin: 0; background: #f0f0f0; }
  .screen { position: relative; display: flex; flex-direction: column; min-height: 100vh; font: 12px/16px Roboto, 'Open Sans', sans-serif; color: #111; background: #f0f0f0; overflow: hidden; }
  button, input, select { font: inherit; color: inherit; margin: 0; padding: 0; border: 0; background: none; box-sizing: border-box; border-radius: 0; }
  a { color: inherit; text-decoration: none; }
  h1, h2 { margin: 0; font-size: 12px; font-weight: 400; }
  svg { display: block; flex: none; }
  fieldset { margin: 0; padding: 0; min-width: 0; }

  .titlebar { display: flex; align-items: center; height: 23px; padding: 0 17px 0 2px; gap: 3px; background: #fff; color: #999; }
  .titlebar button { width: 12px; height: 12px; }
  .titlebar svg path { fill: none; stroke: #888; }
  .titlebar .icon { width: 18px; }
  .appbtns { display: flex; gap: 33px; margin-left: auto; padding-right: 2px; }
  .menu { display: flex; gap: 22px; height: 20px; padding-left: 11px; align-items: center; border-bottom: 1px solid #a0a0a0; }

  .toolbar { display: flex; align-items: center; height: 29px; border-top: 1px solid #fff; border-bottom: 3px solid #6e6e6e; color: #0f5f9e; }
  .tool { display: flex; align-items: center; justify-content: center; width: 30px; height: 25px; margin: 0 1px; flex: none; gap: 6px; border: 1px solid transparent; }
  .tool.on { background: #c0dcf3; border-color: #90c8f6; }
  .tool.drop { width: 39px; }
  .tool.wide { width: 110px; color: #111; }
  .sep { width: 2px; height: 26px; margin: 0 2px; border-left: 1px solid #909090; box-sizing: border-box; flex: none; }
  .grip { width: 3px; height: 26px; margin: 0 3px 0 1px; flex: none; background: repeating-linear-gradient(#aaa 0 2px, transparent 2px 4px); background-size: 2px; background-repeat: repeat-y; }
  .sep + .grip { margin: 0 2px 0 -2px; }
  .account { display: flex; align-items: center; gap: 14px; margin-left: auto; padding-right: 6px; }
  .user { position: relative; }
  .user b { position: absolute; left: 7px; top: -3px; width: 14px; height: 15px; border-radius: 8px; background: #e8341c; color: #fff; font: 12px/15px Roboto, sans-serif; text-align: center; }
  .lvl { display: flex; flex-direction: column; align-items: center; color: #0ba51c; font-size: 9px; line-height: 9px; margin-right: -5px; }
  .battery { width: 40px; height: 11px; border: 1px solid #888; background: #fff; }
  .battery i { display: block; width: 7px; height: 11px; background: #43d843; }

  .workspace { display: flex; flex: 1; padding-right: 4px; }
  .window { flex: 1 1 0; min-width: 0; padding: 0 6px 5px 5px; border-left: 3px solid #6e6e6e; }
  .window header { display: flex; align-items: center; gap: 6px; height: 28px; padding: 0 3px; }
  .window h2 { color: #777; }
  .winbtns { display: flex; gap: 24px; margin-left: auto; padding: 4px 8px 0 0; }
  .winbtns path { fill: none; stroke: #b4b4b4; }
  .chart { position: relative; display: flex; border: 1px solid #808080; border-color: #707070 #fff #fff #808080; background: #ccc; font-family: 'DejaVu Sans Condensed', 'DejaVu Sans', sans-serif; }
  .chart text { font-size: 12px; }
  .plot { flex: 1 1 0; min-width: 0; width: 0; }
  .axis { width: 79px; }
  .cell, .mid { text-anchor: middle; }
  .end { text-anchor: end; }
  .chart .clock { font-size: 11px; font-weight: 700; fill: #46505f; }
  .tag { font-weight: 700; fill: #fff; }
  .tag.light { font-weight: 400; }
  .panel { position: absolute; left: 4px; top: 3px; display: flex; align-items: center; gap: 2px; height: 18px; color: #111; }
  .panel > span:first-child { margin-right: 9px; }
  .panel.modes { left: 581px; }
  .window + .window .panel.modes { left: 659px; }
  .mark { width: 16px; height: 16px; border: 1px solid #222; background: #d2d2d2; flex: none; }
  .mark.on { background: #848484; }
  .mark :global(path) { fill: none; stroke: #000; }
  .panel select { width: 84px; height: 18px; border: 1px solid #222; padding-left: 2px; appearance: none; background: linear-gradient(to bottom right, #111 50%, transparent 51%) 74px 5px / 4px 7px no-repeat, linear-gradient(to bottom left, #111 50%, transparent 51%) 70px 5px / 4px 7px no-repeat; }
  .wrench { position: absolute; left: 4px; top: 694px; }
  time { position: absolute; right: 9px; bottom: 0; }

  .spin { display: inline-flex; box-sizing: border-box; height: 20px; padding: 1px; border: 1px solid #a8a8a8; background: #fff; flex: none; }
  .spin input { flex: 1; min-width: 0; padding-left: 1px; font-size: 12px; }
  .arrows { display: flex; flex-direction: column; width: 14px; }
  .arrows button { flex: 1; display: flex; align-items: center; justify-content: center; background: #f0f0f0; border: 1px solid #b8b8b8; }
  .flat { width: 42px; height: 18px; padding: 0; border-color: #222; background: none; }
  .w42 { width: 42px; }
  .w47 { width: 47px; }
  .w57 { width: 57px; }
  .w65 { width: 65px; }

  .tabs { display: flex; height: 18px; margin-bottom: 3px; border-top: 1px solid #000; border-bottom: 1px solid #fff; color: #888; }
  .tabs a { padding: 0 15px 0 12px; line-height: 18px; }
  .tabs a.active { margin-left: 3px; padding: 0 10px; background: #fff; color: #111; border: 1px solid #000; border-top: 0; }
  .nudge { display: flex; gap: 16px; align-items: center; margin-left: auto; padding-right: 12px; fill: #b0b0b0; }

  .terminal { display: flex; height: 121px; border-top: 1px solid #fff; }
  .strip { width: 15px; display: flex; flex-direction: column; align-items: center; flex: none; }
  .strip button { font: 700 10px/12px 'DejaVu Sans', sans-serif; height: 14px; }
  .strip span { flex: 1; width: 12px; background: #bcd2e6; font: 10px/12px 'DejaVu Sans', sans-serif; writing-mode: vertical-rl; transform: rotate(180deg); text-align: left; }
  .terminal-main { flex: 1; margin-right: 4px; min-width: 0; display: flex; flex-direction: column; }
  table { width: 100%; table-layout: fixed; border-collapse: collapse; border-top: 1px solid #a0a0a0; background: #fff; }
  .c1 { width: 228px; } .c2 { width: 159px; } .c3 { width: 140px; } .c4 { width: 175px; } .c5 { width: 175px; } .c7 { width: 191px; } .c8 { width: 325px; }
  th, td { padding: 0 5px; border-right: 1px solid #d8d8d8; text-align: right; font-weight: 400; white-space: nowrap; }
  th { height: 23px; }
  td { height: 19px; color: #444; border-bottom: 1px solid #c4c4c4; }
  tr:first-child td { border-bottom: 0; }
  .left { text-align: left; }
  th.left { padding-left: 7px; }
  .dark, .sym { color: #111; }
  .hid { border-right: 0; }
  .filled { background: linear-gradient(90deg, #63f363 300px, #fff 300px); }
  td svg { display: inline-block; vertical-align: middle; margin-right: 4px; }
  .balance td { background: #c8c8c8; color: #111; font-weight: 700; border: 0; padding-right: 0; }
  .balance span { font-weight: 400; }
  td:last-child, th:last-child { padding-right: 5px; border-right: 0; }
  .profit { color: #1a1af0; }
  .x { width: 12px; height: 14px; margin-left: 7px; color: #8a8a8a; font: 700 15px/14px Roboto, sans-serif; }
  .add { width: 15px; height: 15px; margin-left: 6px; border-radius: 8px; background: #fff; color: #2fb41c; font: 700 17px/14px Roboto, sans-serif; }
  .pages { display: flex; margin-top: 14px; height: 22px; border-top: 1px solid #000; color: #777; background: #f0f0f0; box-shadow: 0 -14px #fff; align-items: center; }
  .pages > a { position: relative; padding: 0 9px; border-right: 1px solid #888; line-height: 15px; }
  .pages > a:nth-last-child(2) { border: 0; }
  .pages > a.active { margin-left: 3px; height: 20px; line-height: 20px; align-self: flex-start; background: #fff; color: #111; border: 1px solid #000; border-top: 0; }
  .pages sub { color: #f00; font-size: 10px; line-height: 0; }
  .services { display: flex; gap: 10px; margin-left: auto; padding-right: 8px; color: #111; }
  .services a { display: flex; align-items: center; gap: 5px; }

  .status { display: flex; align-items: center; height: 23px; margin-top: 2px; border-top: 2px solid #a0a0a0; }
  .help { flex: 1; padding-left: 2px; }
  .status i { width: 69px; height: 18px; border-left: 1px solid #a0a0a0; }
  .status .last { width: 0; }
  .ping { display: flex; gap: 8px; width: 115px; padding-left: 5px; align-items: center; }

  .taskbar { display: flex; height: 40px; background: #1f1f1f; color: #fff; }
  .start { width: 48px; display: flex; align-items: center; justify-content: center; }
  .find { display: flex; align-items: center; gap: 9px; width: 344px; padding-left: 12px; box-sizing: border-box; background: #f0f0f0; }
  .find input { flex: 1; font: 15px/20px Roboto, sans-serif; color: #333; }
  .find input::placeholder { color: #444; opacity: 1; }
  .apps { display: flex; gap: 1px; padding-left: 3px; }
  .apps button { position: relative; width: 48px; display: flex; align-items: center; justify-content: center; }
  .apps .run { box-shadow: inset 0 -3px #e4f7b4; margin: 0 4px; width: 40px; }
  .apps .alert { background: #a65f29; box-shadow: inset 0 -3px #ff7800; }
  .apps b { position: absolute; right: 8px; bottom: 6px; padding: 0 2px; background: #f23c3c; border-radius: 3px; font: 10px/13px Roboto, sans-serif; }
  .tray { display: flex; align-items: center; gap: 10px; margin-left: auto; padding-right: 6px; }
  .up { display: flex; align-items: center; justify-content: center; width: 22px; height: 38px; margin: 0 -4px; background: #383838; }
  .tg { position: relative; }
  .tg b { position: absolute; left: 5px; top: 5px; background: #f23c3c; border-radius: 3px; font: 8px/10px Roboto, sans-serif; padding: 0 1px; }
  .ru { width: 16px; height: 16px; background: #00007c; text-align: center; }
  .lang, .now, .notes { margin-left: 4px; }
  .now { text-align: center; line-height: 18px; }
  .notes { position: relative; width: 32px; }
  .notes b { position: absolute; left: 8px; top: 6px; width: 15px; height: 15px; border-radius: 8px; background: #555; font: 11px/15px Roboto, sans-serif; text-align: center; }

  .dialog { position: absolute; left: 966px; top: 673px; width: 450px; border: 1px solid #8a8a8a; background: #f0f0f0; box-shadow: 3px 3px 8px rgb(0 0 0 / 40%); font: 11px/14px 'DejaVu Sans Condensed', 'DejaVu Sans', sans-serif; color: #000; }
  .dialog header { display: flex; align-items: center; justify-content: space-between; height: 30px; padding: 0 9px; background: #fff; }
  .dialog h2 { color: #8c8c8c; font: 12px/16px Roboto, sans-serif; }
  .dialog label { white-space: nowrap; }
  .body { padding: 5px 5px 4px; }
  .cols { display: flex; gap: 6px; }
  .leftcol { width: 222px; }
  .rightcol { width: 212px; }
  .orders { display: flex; gap: 12px; margin-bottom: 9px; }
  .pair { display: flex; gap: 11px; margin-bottom: 9px; }
  .stack { display: flex; flex-direction: column; gap: 10px; width: 50px; font-size: 12px; }
  .stack.big { width: 84px; gap: 15px; font-size: 11px; line-height: 13px; }
  .stack.wide { width: 65px; }
  .stack button { height: 20px; border: 1px solid #333; }
  .stack.big button { height: 35px; }
  .stack .sell { background: #ff7f50; border-color: #8a3c1c; }
  .stack .buy { background: #1e90ff; border-color: #0f4a86; }
  .stack .close { height: 24px; background: #f00; border-color: #700; font-weight: 700; font-size: 11px; }
  .stack .all { height: 24px; background: #d3d3d3; }
  .stack .rev { background: #d3d3d3; }
  .row { display: flex; align-items: center; }
  .spread { justify-content: space-between; }
  .stops { justify-content: space-between; margin-bottom: 7px; }
  .trail strong { width: 68px; color: #006400; font-size: 11px; }
  .trail label { width: 43px; }
  .trail .step { width: auto; padding-left: 17px; }
  .tick { display: inline-flex; align-items: center; gap: 4px; white-space: nowrap; }
  .tick input { appearance: none; width: 13px; height: 13px; border: 1px solid #222; background: #fff center / 11px 11px no-repeat; flex: none; }
  .tick input[type='checkbox']:checked { background-image: url("data:image/svg+xml,%3Csvg xmlns='http://www.w3.org/2000/svg' viewBox='0 0 11 11'%3E%3Cpath d='M1.500 5.500l3 3 5-6.500' fill='none' stroke='%23333' stroke-width='1.300'/%3E%3C/svg%3E"); }
  .tick input[type='radio'] { border-radius: 50%; }
  .tick input[type='radio']:checked { background: radial-gradient(#222 0 3px, #fff 4px); }
  .group { position: relative; border: 1px solid #dcdcdc; box-sizing: border-box; }
  .group legend { padding: 0 3px; line-height: 14px; height: 14px; }
  .limit { padding: 0 0 0 5px; height: 123px; }
  .line { display: flex; align-items: center; gap: 8px; }
  .limit .line { height: 22px; }
  .limit .tick { margin-top: 2px; }
  .line .fill { flex: 1; }
  .line.end { gap: 6px; padding-right: 10px; }
  .line.third { padding-right: 15px; }
  .profitrow { height: 20px; margin: 3px 0 3px 9px; }
  .trail2 { justify-content: space-between; margin: 6px 4px 0 6px; }
  .signals { display: flex; gap: 6px; margin-top: 7px; }
  .signal { width: 222px; height: 119px; padding-left: 6px; }
  .signal.imb { width: 212px; }
  .signal .line { height: 24px; gap: 2px; }
  .signal .tolerance { height: 20px; gap: 6px; }
  .way { width: 71px; }
  .enable { color: #006400; font-weight: 700; font-size: 14px; }
  .useline { width: 139px; }
  .combined { margin-top: 8px; }
</style>
